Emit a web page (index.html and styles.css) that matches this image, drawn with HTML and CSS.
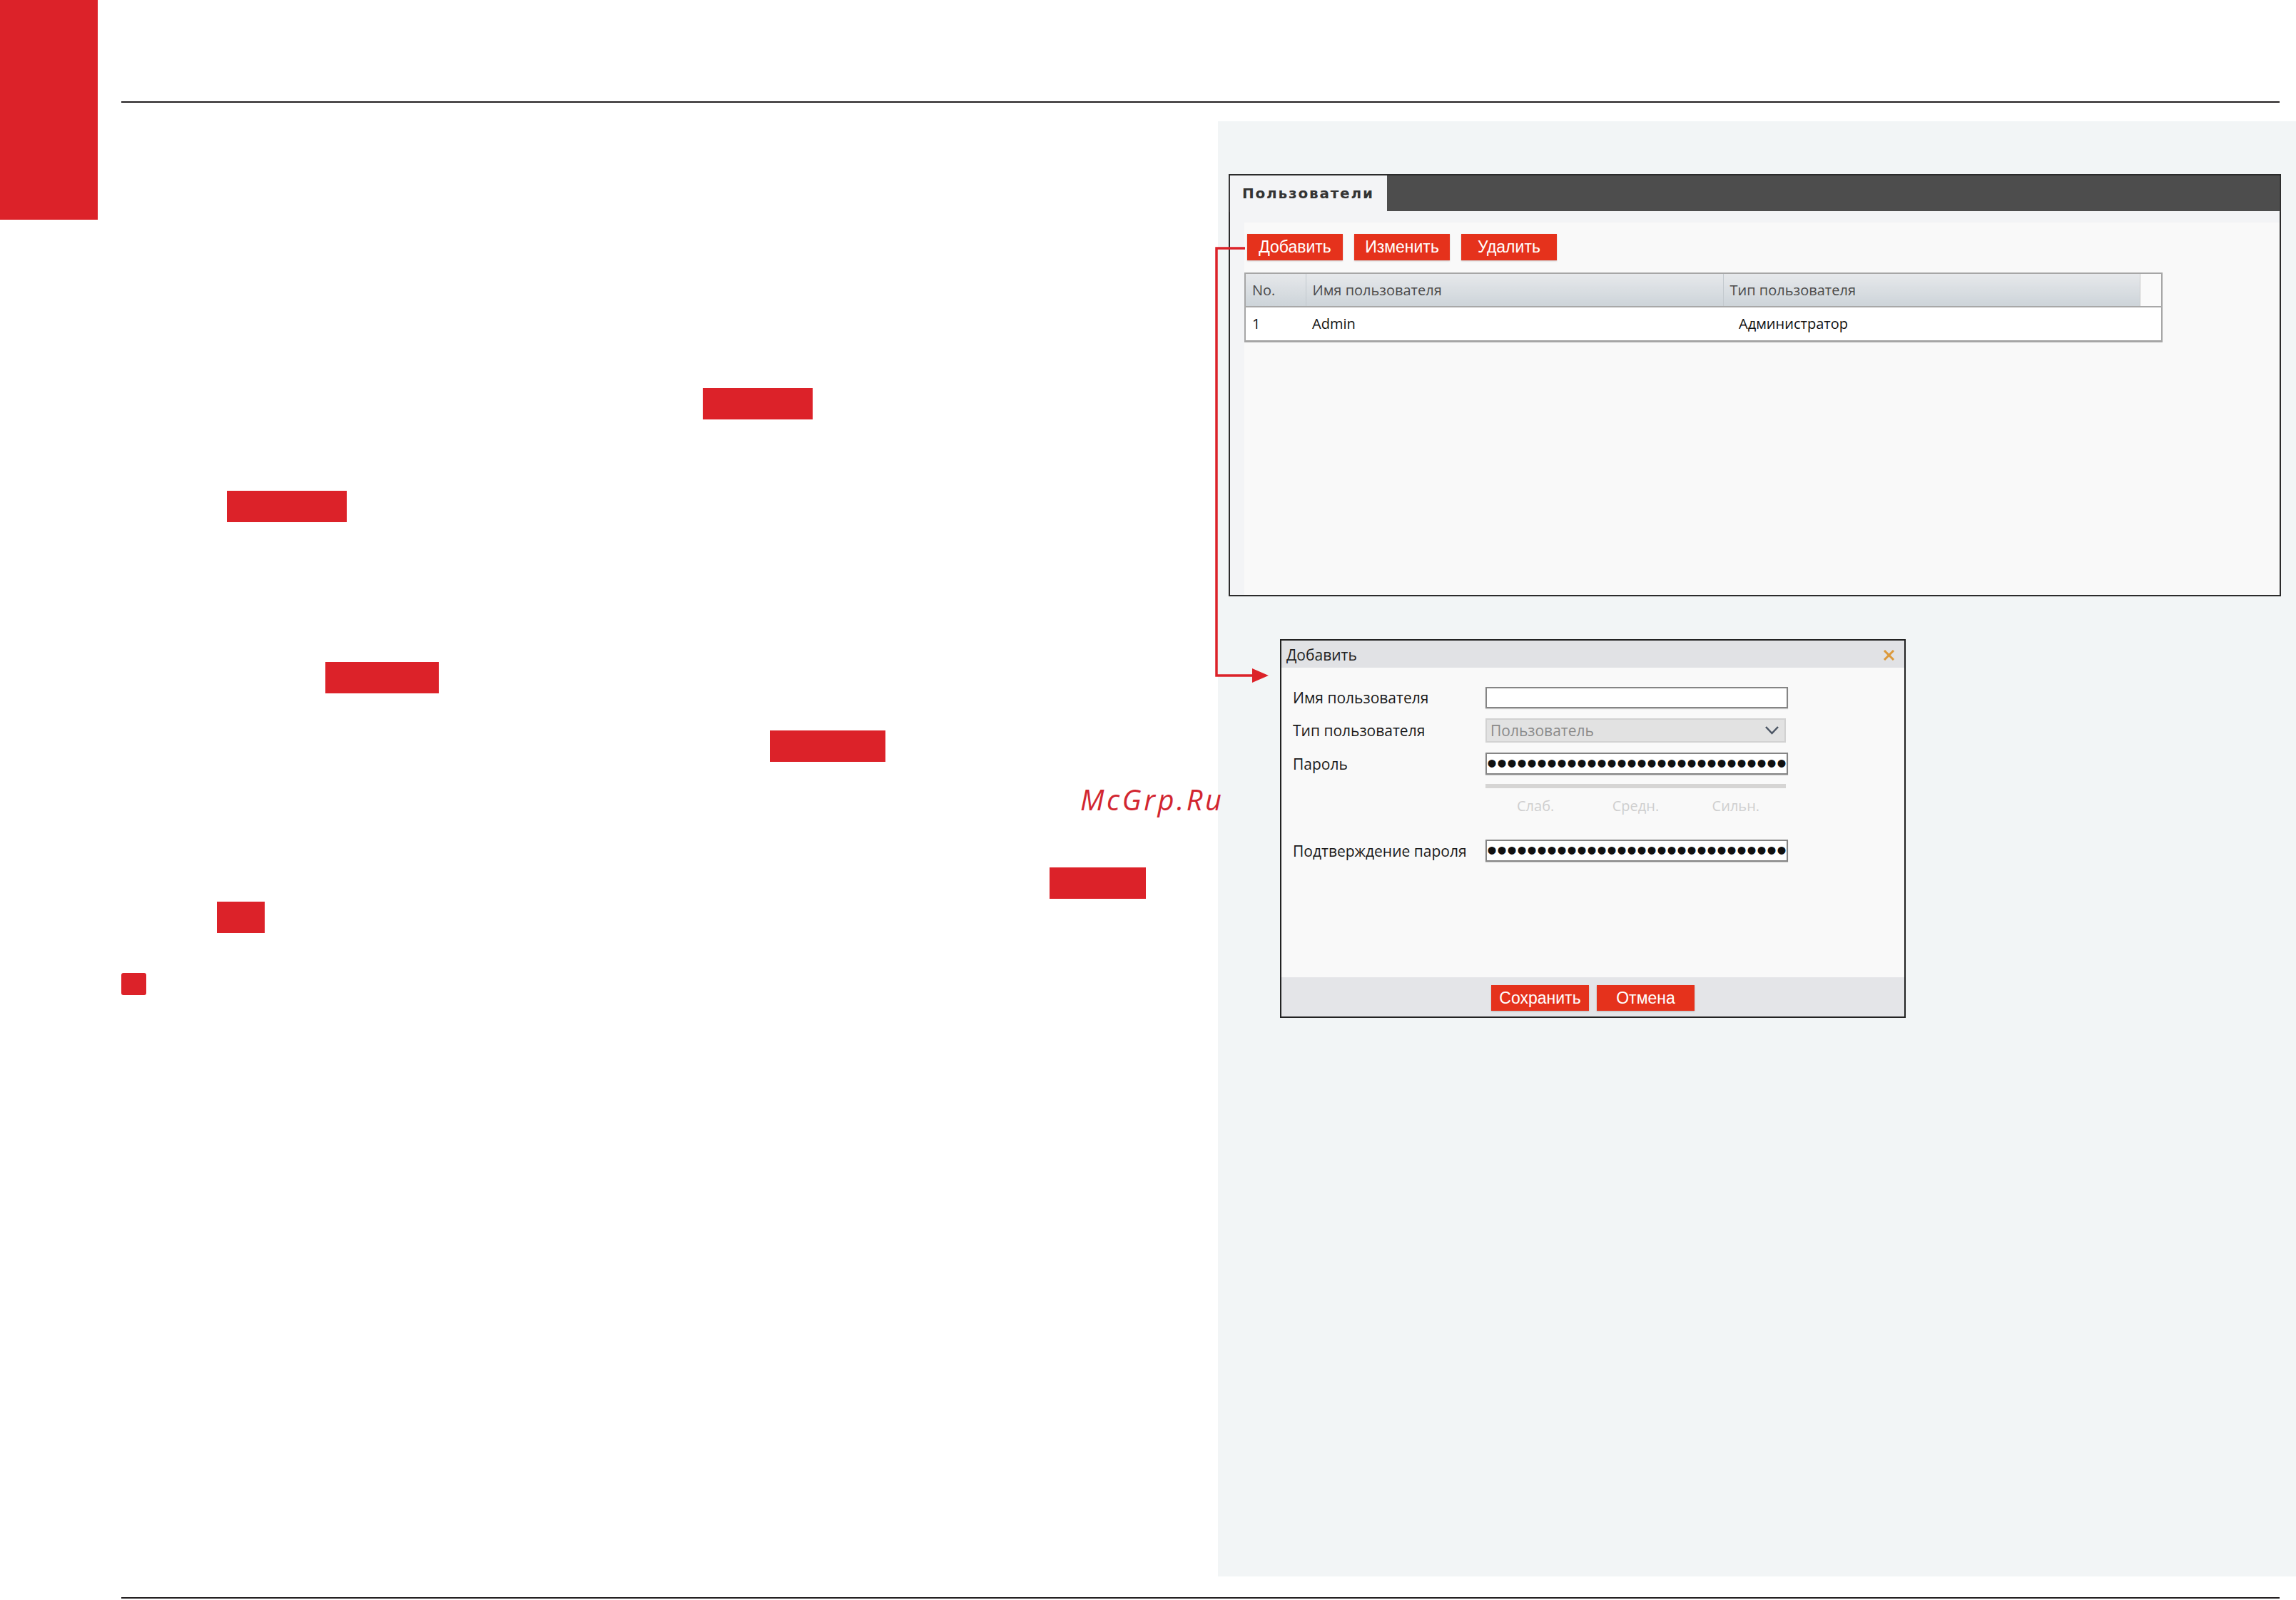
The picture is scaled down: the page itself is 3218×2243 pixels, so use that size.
FILE: index.html
```html
<!DOCTYPE html>
<html lang="ru">
<head>
    <meta charset="UTF-8">
    <meta name="viewport" content="width=device-width, initial-scale=1.0">
    <title>Пользователи</title>
    <link rel="stylesheet" href="styles.css">
</head>
<body>
    <div class="page">
        <div class="corner"></div>
        <div class="sheet">
            <div class="rule"></div>
            <div class="columns">
                <div class="notes">
                    <span class="mark m1"></span>
                    <span class="mark m2"></span>
                    <span class="mark m3"></span>
                    <span class="mark m4"></span>
                    <span class="mark m5"></span>
                    <span class="mark m6"></span>
                    <span class="mark m7"></span>
                    <span class="watermark">McGrp.Ru</span>
                </div>
                <div class="shot">
                    <svg class="connector" width="90" height="620" viewBox="0 0 90 620">
                        <polyline points="44,8 4,8 4,607 56,607" fill="none" stroke="#dc2229" stroke-width="3.5"/>
                        <polygon points="54,597 77,607 54,617" fill="#dc2229"/>
                    </svg>
                    <div class="window">
                        <div class="win-head">
                            <div class="win-tab">Пользователи</div>
                        </div>
                        <div class="win-body">
                            <div class="win-strip"></div>
                            <div class="win-content">
                                <div class="toolbar">
                                    <button class="btn">Добавить</button>
                                    <button class="btn">Изменить</button>
                                    <button class="btn">Удалить</button>
                                </div>
                                <table class="users">
                                    <colgroup>
                                        <col class="c-no">
                                        <col class="c-name">
                                        <col class="c-type">
                                        <col class="c-scroll">
                                    </colgroup>
                                    <thead>
                                        <tr>
                                            <th>No.</th>
                                            <th>Имя пользователя</th>
                                            <th>Тип пользователя</th>
                                            <th class="scroll"></th>
                                        </tr>
                                    </thead>
                                    <tbody>
                                        <tr>
                                            <td>1</td>
                                            <td>Admin</td>
                                            <td class="type" colspan="2">Администратор</td>
                                        </tr>
                                    </tbody>
                                </table>
                            </div>
                        </div>
                    </div>

                    <div class="dialog">
                        <div class="dlg-title">
                            <span>Добавить</span>
                            <svg class="close" width="17" height="15" viewBox="0 0 17 15">
                                <path d="M2 1 L15 14 M15 1 L2 14" stroke="#dc9a3c" stroke-width="3"/>
                            </svg>
                        </div>
                        <div class="dlg-body">
                            <div class="field">
                                <label>Имя пользователя</label>
                                <div class="input"></div>
                            </div>
                            <div class="field">
                                <label>Тип пользователя</label>
                                <div class="select">
                                    <span>Пользователь</span>
                                    <svg width="19" height="12" viewBox="0 0 19 12">
                                        <path d="M1 1 L9.5 10 L18 1" fill="none" stroke="#4a5463" stroke-width="2.5"/>
                                    </svg>
                                </div>
                            </div>
                            <div class="field">
                                <label>Пароль</label>
                                <input class="input secret" type="password" value="passwordpasswordpasswordpassword">
                            </div>
                            <div class="strength">
                                <div class="strength-bar"></div>
                                <div class="strength-labels">
                                    <span>Слаб.</span>
                                    <span>Средн.</span>
                                    <span>Сильн.</span>
                                </div>
                            </div>
                            <div class="field confirm">
                                <label>Подтверждение пароля</label>
                                <input class="input secret" type="password" value="passwordpasswordpasswordpassword">
                            </div>
                        </div>
                        <div class="dlg-foot">
                            <button class="btn wide">Сохранить</button>
                            <button class="btn wide">Отмена</button>
                        </div>
                    </div>
                </div>
            </div>
            <div class="rule bottom"></div>
        </div>
    </div>
</body>
</html>
```

FILE: styles.css
```css
* {
    box-sizing: border-box;
}
body {
    margin: 0;
    width: 3218px;
    height: 2243px;
    overflow: hidden;
    background: #fff;
    font-family: "Open Sans", "DejaVu Sans", sans-serif;
}
.page {
    display: flex;
    align-items: flex-start;
}
.corner {
    flex: none;
    width: 137px;
    height: 308px;
    background: #dc2229;
}
.sheet {
    margin-left: 33px;
    width: 3025px;
    padding-top: 142px;
}
.rule {
    height: 2px;
    background: #231f20;
}
.rule.bottom {
    margin-top: 29px;
}
.columns {
    display: flex;
    margin-top: 26px;
}

/* left page: highlighted words on a 48px line grid */
.notes {
    position: relative;
    z-index: 1;
    flex: none;
    width: 1537px;
    display: grid;
    grid-auto-rows: 48px;
    align-content: start;
    padding-top: 38px;
}
.mark {
    grid-column: 1;
    justify-self: start;
    align-self: start;
    height: 44px;
    background: #dc2229;
}
.m1 { grid-row: 8; margin-left: 815px; width: 154px; }
.m2 { grid-row: 11; margin-left: 148px; width: 168px; }
.m3 { grid-row: 16; margin-left: 286px; width: 159px; }
.m4 { grid-row: 18; margin-left: 909px; width: 162px; }
.m5 { grid-row: 22; margin-left: 1301px; width: 135px; }
.m6 { grid-row: 23; margin-left: 134px; width: 67px; }
.m7 { grid-row: 25; width: 35px; height: 31px; margin-top: 4px; border-radius: 3px; }
.watermark {
    position: absolute;
    left: 1344px;
    top: 931px;
    font-size: 40px;
    line-height: 1;
    font-style: italic;
    letter-spacing: 3.5px;
    color: #d22630;
    white-space: nowrap;
}

/* right: screenshot panel */
.shot {
    position: relative;
    flex: none;
    width: 1511px;
    height: 2040px;
    margin-right: -23px;
    background: #f2f5f6;
    padding: 74px 0 0 15px;
}
.connector {
    position: absolute;
    left: -6px;
    top: 170px;
}
.window {
    width: 1475px;
    height: 592px;
    border: 2px solid #2b2b2b;
    background: #f9f9f9;
    display: flex;
    flex-direction: column;
}
.win-head {
    flex: none;
    height: 50px;
    display: flex;
    background: #4d4d4d;
    box-shadow: 0 1px 1px #9a9a9a;
}
.win-tab {
    width: 220px;
    display: flex;
    align-items: center;
    padding-left: 17px;
    background: #f3f4f6;
    font-family: "DejaVu Sans", sans-serif;
    font-weight: bold;
    font-size: 20px;
    letter-spacing: 1.8px;
    color: #333;
}
.win-body {
    flex: 1;
    display: flex;
}
.win-strip {
    width: 20px;
    background: #f3f4f6;
}
.win-content {
    flex: 1;
    background: #f9f9f9;
    border-top: 16px solid #f3f4f6;
    padding-top: 16px;
}
.toolbar {
    display: flex;
    gap: 16px;
    margin-left: 4px;
}
.btn {
    width: 134px;
    height: 37px;
    padding: 0;
    border: none;
    background: #e5321c;
    color: #fff;
    font-family: "Liberation Sans", sans-serif;
    font-size: 23px;
    box-shadow: 0 1px 2px rgba(0,0,0,0.2);
}
.btn.wide {
    width: 137px;
    height: 36px;
}
.users {
    margin-top: 17px;
    width: 1285px;
    border-collapse: collapse;
    border: 2px solid #a6a6a6;
    border-bottom-width: 3px;
    table-layout: fixed;
    font-size: 20px;
}
.c-no { width: 85px; }
.c-name { width: 585px; }
.c-type { width: 584px; }
.c-scroll { width: 31px; }
.users th {
    height: 47px;
    padding: 0 0 0 9px;
    text-align: left;
    font-weight: normal;
    color: #4a4a4a;
    background: linear-gradient(#e6e8eb, #cdd4d9);
    border-left: 1px solid #c3c9ce;
    border-bottom: 2px solid #a8a8a8;
}
.users th:first-child {
    border-left: none;
}
.users th.scroll {
    background: #fafafa;
    border-left: 1px solid #c8c8c8;
}
.users td {
    height: 48px;
    padding: 0 0 0 9px;
    background: #fff;
    color: #111;
}
.users td.type {
    padding-left: 22px;
}

/* add user dialog */
.dialog {
    margin-top: 60px;
    margin-left: 72px;
    width: 877px;
    height: 531px;
    border: 2px solid #222;
    background: #f9f9f9;
    display: flex;
    flex-direction: column;
}
.dlg-title {
    flex: none;
    height: 38px;
    display: flex;
    align-items: center;
    justify-content: space-between;
    padding: 2px 13px 0 7px;
    background: #e1e2e5;
    font-size: 21px;
    color: #222;
}
.dlg-body {
    flex: 1;
    padding: 27px 0 0 16px;
}
.field {
    display: flex;
    align-items: center;
}
.field + .field {
    margin-top: 14px;
}
.field label {
    width: 270px;
    font-size: 21px;
    color: #1a1a1a;
}
.input {
    width: 424px;
    height: 30px;
    background: #fff;
    border: 2px solid #858585;
    box-shadow: 0 1px 1px #d0d0d0;
}
.select {
    width: 421px;
    height: 34px;
    display: flex;
    align-items: center;
    justify-content: space-between;
    padding: 0 8px 0 5px;
    background: #e2e2e2;
    border: 2px solid #d2d2d2;
    font-size: 21px;
    color: #8a8a8a;
}
.secret {
    height: 31px;
    padding: 0;
    font-family: "Liberation Sans", sans-serif;
    font-size: 40px;
    letter-spacing: 0;
    color: #111;
    outline: none;
}
.strength {
    margin-left: 270px;
    width: 421px;
    padding-top: 13px;
}
.strength-bar {
    height: 6px;
    background: #d6d5d4;
}
.strength-labels {
    margin-top: 14px;
    height: 22px;
    display: grid;
    grid-template-columns: 1fr 1fr 1fr;
    text-align: center;
    font-size: 20px;
    line-height: 22px;
    color: #cfcfcf;
}
.field.confirm {
    margin-top: 36px;
}
.dlg-foot {
    flex: none;
    height: 55px;
    display: flex;
    justify-content: center;
    gap: 11px;
    padding-top: 11px;
    background: #e4e5e8;
}
```
